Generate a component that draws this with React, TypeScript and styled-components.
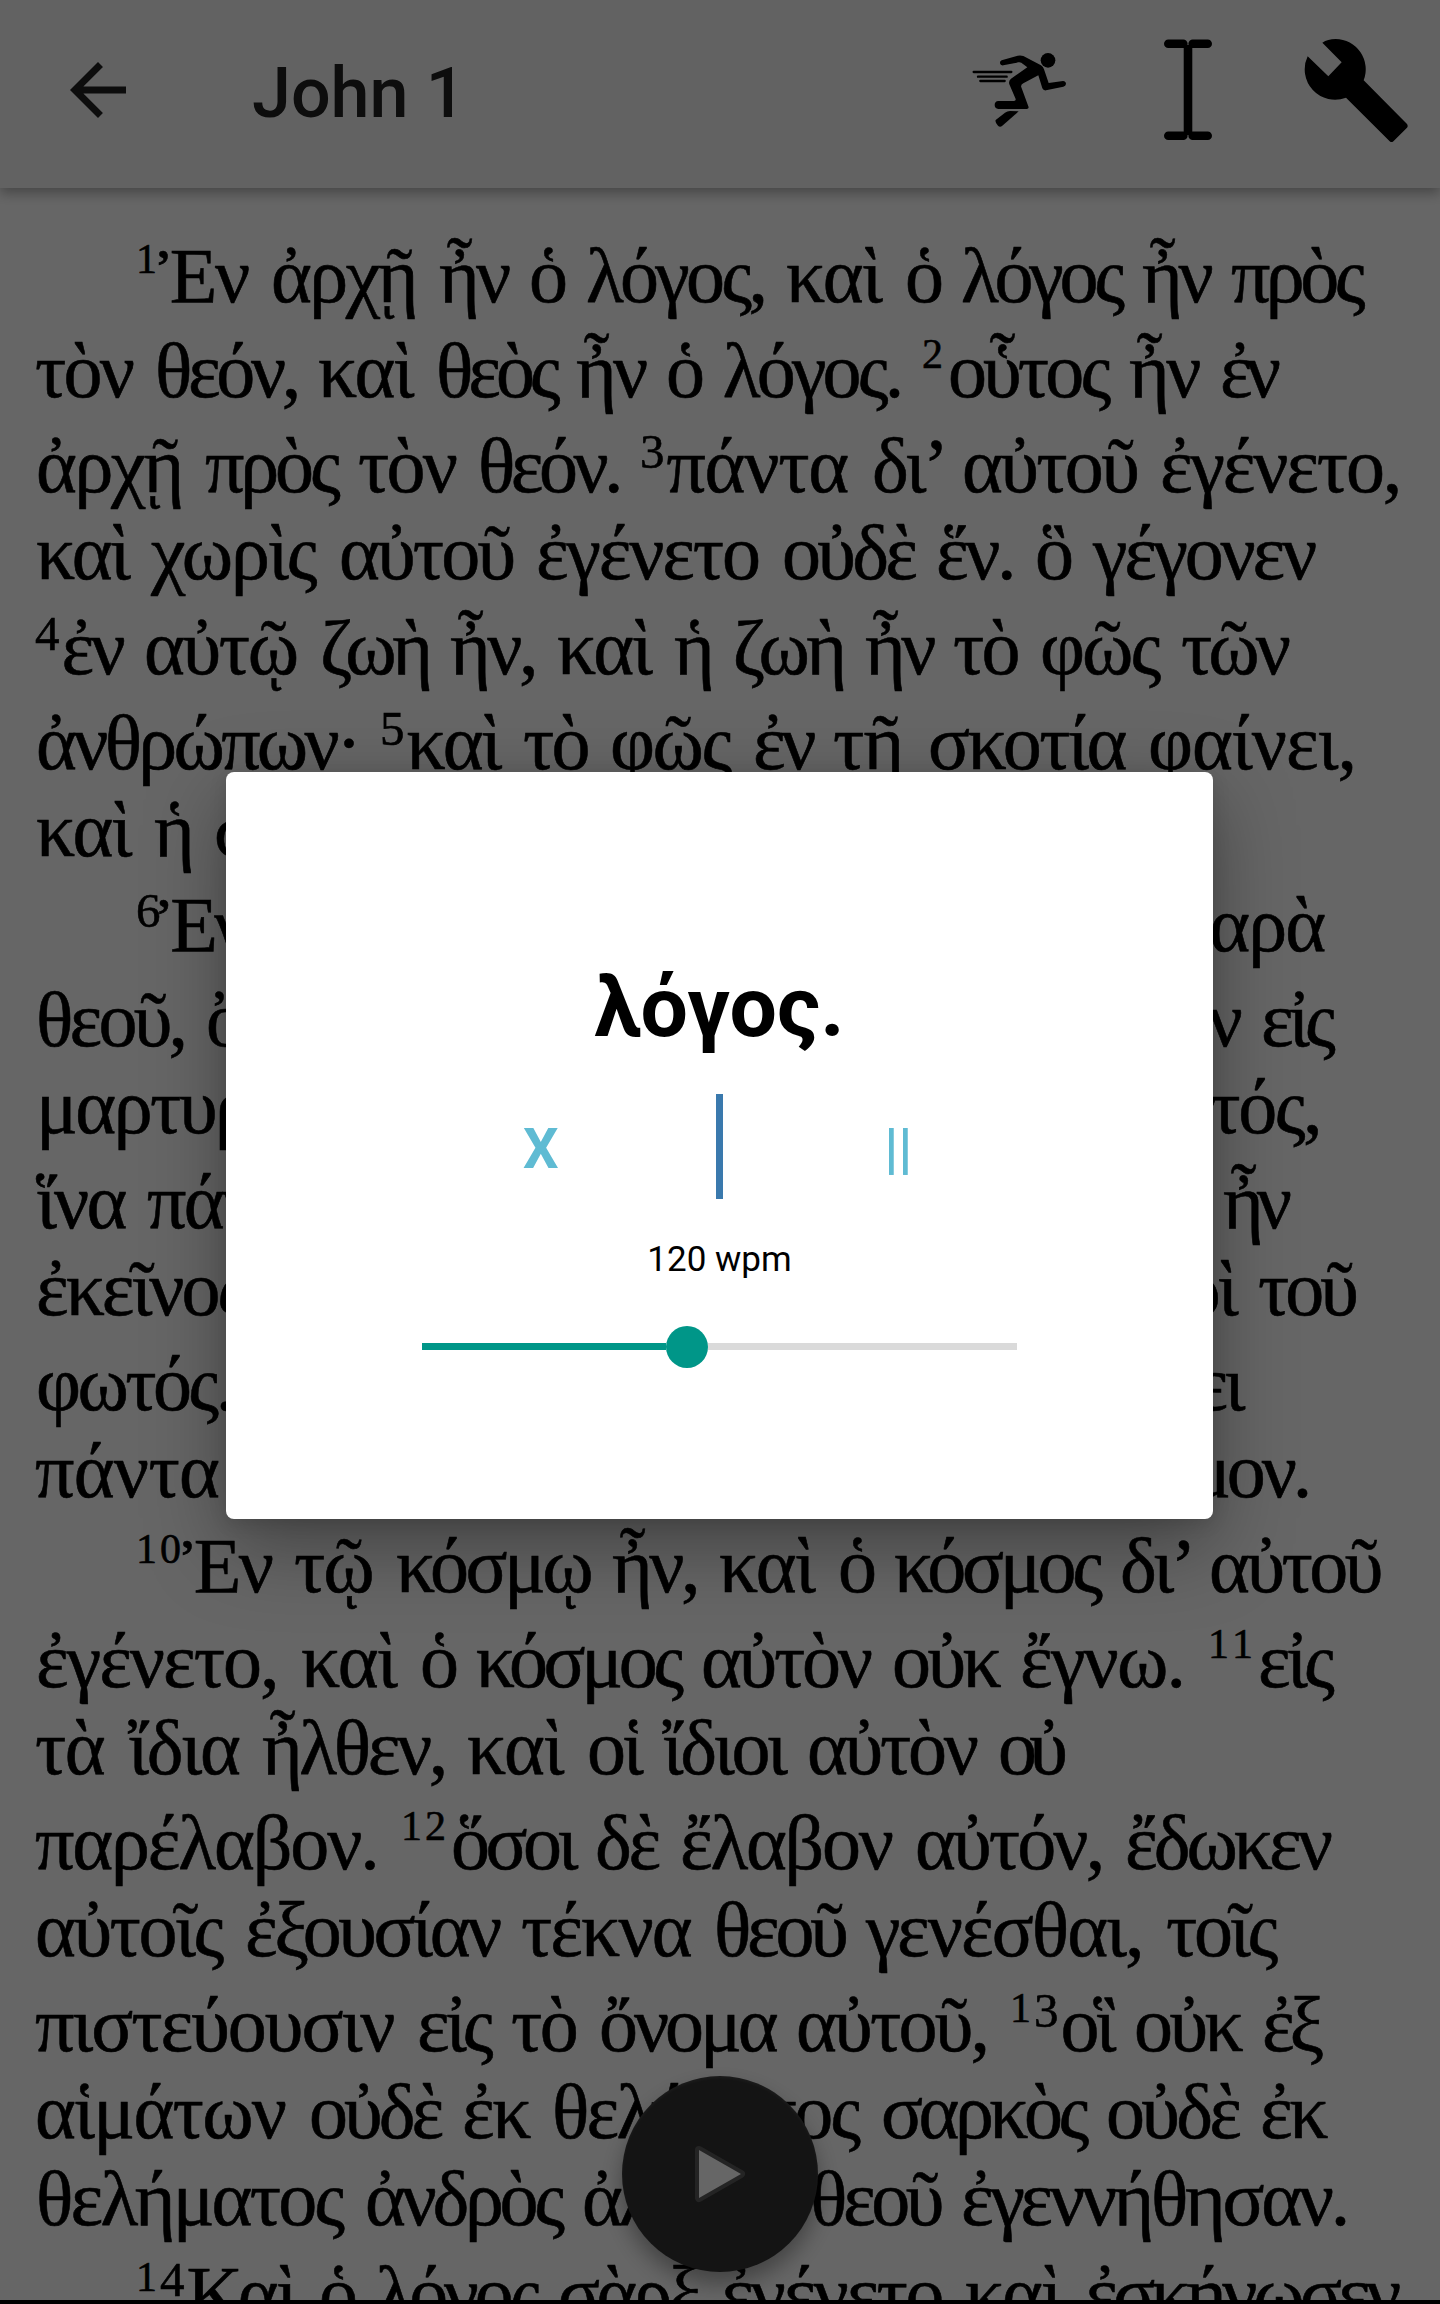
import React, { useLayoutEffect, useRef, useState } from 'react';
import styled, { createGlobalStyle } from 'styled-components';

const GlobalStyle = createGlobalStyle`
  *, *::before, *::after { box-sizing: border-box; }
  html, body { margin: 0; padding: 0; background: #fff; }
  svg { display: block; }
`;

const Screen = styled.div`
  position: relative;
  display: flex;
  flex-direction: column;
  width: 1440px;
  height: 2304px;
  overflow: hidden;
  background: #fff;
`;

const Toolbar = styled.header`
  position: relative;
  z-index: 1;
  display: flex;
  align-items: center;
  flex: none;
  height: 188px;
  padding: 0 32px 8px 56px;
  background: #f6f6f6;
  box-shadow: 0 5px 12px rgba(0, 0, 0, 0.32);
`;

const Title = styled.h1`
  flex: 1;
  margin: 6px 0 0 112px;
  font: 500 70px/84px Roboto, sans-serif;
  color: #212121;
`;

const Actions = styled.div`
  display: flex;
  align-items: center;
`;

const Action = styled.span<{ $gap?: number; $lift?: number }>`
  display: flex;
  margin-left: ${(p) => p.$gap ?? 0}px;
  padding-bottom: ${(p) => p.$lift ?? 0}px;
`;

const Reader = styled.main`
  flex: 1;
  min-height: 0;
  overflow: hidden;
  padding-top: 36px;
  font-family: 'Liberation Serif', 'Noto Sans', serif;
  font-size: 78px;
  color: #000;
  -webkit-text-stroke: 0.6px #000;
`;

const LineBox = styled.div<{ $tall: boolean }>`
  display: flex;
  align-items: flex-end;
  height: ${(p) => (p.$tall ? 95 : 87)}px;
  line-height: 87px;
  white-space: pre;
`;

const Segment = styled.span`
  flex: none;
`;

const SegmentText = styled.span`
  word-spacing: 6px;
`;

const Digit = styled.span<{ $low: boolean }>`
  font-size: ${(p) => (p.$low ? 42 : 49)}px;
  line-height: 0;
  letter-spacing: ${(p) => (p.$low ? 3 : 0)}px;
  vertical-align: ${(p) => (p.$low ? 29 : 24)}px;
`;

const VerseNumber = styled.span<{ $tuck: boolean }>`
  margin-right: ${(p) => (p.$tuck ? -1 : 2)}px;
`;

const NavBar = styled.footer`
  position: relative;
  z-index: 3;
  flex: none;
  height: 4px;
  background: #000;
`;

const PlayButton = styled.button`
  position: absolute;
  left: 622px;
  top: 2076px;
  z-index: 1;
  display: flex;
  align-items: center;
  justify-content: center;
  width: 196px;
  height: 196px;
  padding: 0;
  border: 0;
  border-radius: 50%;
  background: #323232;
  box-shadow: 0 12px 22px rgba(0, 0, 0, 0.35), inset 0 2px 3px rgba(255, 255, 255, 0.1);
`;

const Scrim = styled.div`
  position: absolute;
  inset: 0;
  z-index: 2;
  display: flex;
  align-items: flex-start;
  justify-content: center;
  padding: 772px 1px 0 0;
  background: rgba(0, 0, 0, 0.6);
`;

const Dialog = styled.section`
  display: flex;
  flex-direction: column;
  align-items: center;
  width: 987px;
  height: 747px;
  padding-top: 186px;
  border-radius: 8px;
  background: #fff;
  box-shadow: 0 26px 80px rgba(0, 0, 0, 0.36), 0 4px 18px rgba(0, 0, 0, 0.12);
  font-family: Roboto, sans-serif;
`;

const Word = styled.div`
  height: 100px;
  font-weight: 700;
  font-size: 84px;
  line-height: 100px;
  color: #000;
`;

const Controls = styled.div`
  display: grid;
  grid-template-columns: 1fr 7px 1fr;
  align-items: center;
  width: 708px;
  height: 105px;
  margin-top: 36px;
`;

const Control = styled.button`
  padding: 4px 0 0;
  border: 0;
  background: none;
  font: 700 56px/66px Roboto, sans-serif;
  color: #5fbbd3;
`;

const Marker = styled.span`
  height: 105px;
  background: #3a79ad;
`;

const Speed = styled.div`
  margin-top: 40px;
  font-size: 35px;
  line-height: 42px;
  color: #000;
`;

const Slider = styled.div`
  display: flex;
  align-items: center;
  width: 595px;
  height: 42px;
  margin-top: 45px;
`;

const TrackDone = styled.span`
  width: 243.5px;
  height: 7px;
  margin-bottom: 1px;
  background: #009688;
`;

const Thumb = styled.span`
  width: 42px;
  height: 42px;
  border-radius: 50%;
  background: #009688;
`;

const TrackRest = styled.span`
  flex: 1;
  height: 7px;
  margin-bottom: 1px;
  background: #dadada;
`;

// Each line is split into segments by "|"; stops holds the left edge of every
// segment and, last, the right edge of the line.
type LineData = { text: string; stops: number[] };

const LINES: LineData[] = [
  { text: '1Ἐν|ἀρχῇ|ἦν|ὁ λόγος,|καὶ|ὁ λόγος|ἦν|πρὸς', stops: [137, 272, 440, 530, 787, 906, 1143, 1232, 1362] },
  { text: 'τὸν|θεόν,|καὶ|θεὸς|ἦν|ὁ λόγος.|2οὗτος|ἦν|ἐν', stops: [36, 156, 319, 437, 577, 667, 923, 1130, 1221, 1275] },
  { text: 'ἀρχῇ|πρὸς|τὸν|θεόν.|3πάντα|δι’|αὐτοῦ|ἐγένετο,', stops: [37, 206, 359, 479, 641, 873, 963, 1161, 1401] },
  { text: 'καὶ|χωρὶς|αὐτοῦ|ἐγένετο|οὐδὲ|ἕν.|ὃ γέγονεν', stops: [37, 152, 340, 537, 783, 937, 1036, 1315] },
  { text: '4ἐν|αὐτῷ|ζωὴ|ἦν,|καὶ|ἡ ζωὴ|ἦν|τὸ|φῶς|τῶν', stops: [36, 145, 321, 451, 558, 675, 866, 954, 1041, 1182, 1288] },
  { text: 'ἀνθρώπων·|5καὶ|τὸ|φῶς|ἐν|τῇ|σκοτία|φαίνει,', stops: [37, 381, 524, 611, 754, 834, 929, 1149, 1357] },
  { text: 'καὶ|ἡ|σκοτία|αὐτὸ οὐ κατέλαβεν.', stops: [37, 155, 215, 434, 1001] },
  { text: '6Ἐγένετο ἄνθρωπος, ἀπεσταλμένος|παρὰ', stops: [137, 1173, 1325] },
  { text: 'θεοῦ,|ὄνομα αὐτῷ Ἰωάννης· 7οὗτος ἦλθεν|εἰς', stops: [37, 207, 1262, 1332] },
  { text: 'μαρτυρίαν, ἵνα μαρτυρήσῃ περὶ τοῦ|φωτός,', stops: [37, 1119, 1321] },
  { text: 'ἵνα|πάντες πιστεύσωσιν δι’ αὐτοῦ. 8οὐκ|ἦν', stops: [37, 148, 1224, 1286] },
  { text: 'ἐκεῖνος τὸ φῶς, ἀλλ’ ἵνα μαρτυρήσῃ περὶ|τοῦ', stops: [37, 1259, 1356] },
  { text: 'φωτός. 9ἦν τὸ φῶς τὸ ἀληθινόν, ὃ φωτίζει', stops: [37, 1243] },
  { text: 'πάντα|ἄνθρωπον, ἐρχόμενον εἰς τὸν κόσμον.', stops: [36, 245, 1309] },
  { text: '10Ἐν|τῷ|κόσμῳ|ἦν,|καὶ|ὁ κόσμος|δι’|αὐτοῦ', stops: [137, 295, 397, 613, 720, 839, 1121, 1210, 1381] },
  { text: 'ἐγένετο,|καὶ|ὁ κόσμος|αὐτὸν|οὐκ|ἔγνω.|11εἰς', stops: [37, 302, 421, 702, 893, 1021, 1209, 1332] },
  { text: 'τὰ|ἴδια|ἦλθεν,|καὶ|οἱ ἴδιοι|αὐτὸν|οὐ', stops: [36, 129, 263, 468, 588, 808, 999, 1061] },
  { text: 'παρέλαβον.|12ὅσοι|δὲ|ἔλαβον|αὐτόν,|ἔδωκεν', stops: [36, 402, 596, 681, 916, 1126, 1330] },
  { text: 'αὐτοῖς|ἐξουσίαν|τέκνα|θεοῦ|γενέσθαι,|τοῖς', stops: [36, 246, 522, 715, 867, 1167, 1276] },
  { text: 'πιστεύουσιν|εἰς|τὸ|ὄνομα|αὐτοῦ,|13οἳ|οὐκ|ἐξ', stops: [36, 418, 512, 600, 797, 1011, 1135, 1263, 1320] },
  { text: 'αἱμάτων|οὐδὲ|ἐκ|θελήματος|σαρκὸς|οὐδὲ|ἐκ', stops: [36, 310, 463, 553, 882, 1107, 1261, 1326] },
  { text: 'θελήματος|ἀνδρὸς|ἀλλ’ ἐκ|θεοῦ|ἐγεννήθησαν.', stops: [37, 366, 583, 811, 962, 1348] },
  { text: '14Καὶ|ὁ λόγος|σὰρξ|ἐγένετο|καὶ|ἐσκήνωσεν', stops: [137, 320, 559, 722, 966, 1086, 1398] },
];

// Tracks the letters of a segment so that it fills its measure.
function FittedText({ text, width }: { text: string; width: number }) {
  const ref = useRef<HTMLSpanElement>(null);
  const [tracking, setTracking] = useState(0);
  const parts = text.split(/(\d+)/).filter(Boolean);
  const letters = text.replace(/\d/g, '').length;

  useLayoutEffect(() => {
    if (!ref.current) return;
    const natural = ref.current.getBoundingClientRect().width - tracking * letters;
    setTracking((width - natural) / letters);
  }, [width, letters]);

  return (
    <Segment style={{ width }}>
      <SegmentText ref={ref} style={{ letterSpacing: tracking }}>
        {parts.map((part, i) =>
          /\d/.test(part) ? (
            <VerseNumber key={i} $tuck={/^[ἘἸ]/.test(parts[i + 1] ?? '')}>
              {part.split('').map((d, j) => (
                <Digit key={j} $low={'012'.includes(d)}>{d}</Digit>
              ))}
            </VerseNumber>
          ) : (
            <React.Fragment key={i}>{part}</React.Fragment>
          ),
        )}
      </SegmentText>
    </Segment>
  );
}

function Line({ text, stops }: LineData) {
  const segments = text.split('|');
  return (
    <LineBox $tall={/\d/.test(text)} style={{ paddingLeft: stops[0] - 1 }}>
      {segments.map((segment, i) => (
        <FittedText
          key={i}
          text={i < segments.length - 1 ? segment + ' ' : segment}
          width={stops[i + 1] - stops[i]}
        />
      ))}
    </LineBox>
  );
}

const BackIcon = () => (
  <svg width="84" height="84" viewBox="0 0 24 24" fill="#212121">
    <path d="M20 11H7.83l5.59-5.59L12 4l-8 8 8 8 1.41-1.41L7.83 13H20v-2z" />
  </svg>
);

const RunIcon = () => (
  <svg width="120" height="110" viewBox="0 0 360 330">
    <circle cx="264" cy="91" r="22" />
    <path d="M41 126H154M54 140H140M61 153H134" stroke="#000" strokeWidth="7" strokeLinecap="round" />
    <path d="M125 91L173 77Q182 75 190 78L243 106Q250 110 252 118L266 159L309 153Q318 154 318 162Q317 168 310 170L258 181Q250 182 247 175L235 136L190 160Q181 165 184 172L206 232Q206 237 200 237H115Q104 236 104 225Q104 214 115 213H162Q168 213 167 207L148 163Q145 152 153 146L202 112L184 98Q180 96 175 97L130 106Q121 107 120 100Q119 94 125 91Z" />
    <path d="M176 244L127 287Q120 293 114 287Q104 276 107 270L135 248Q142 243 150 243Z" />
  </svg>
);

const CursorIcon = () => (
  <svg width="48" height="102" viewBox="0 0 48 102">
    <g stroke="#000" strokeWidth="8.6" strokeLinecap="round">
      <path d="M4.300 4.800H19.300M28.700 4.800H43.700M4.300 96.800H19.300M28.700 96.800H43.700" />
      <path d="M24 6V96" strokeLinecap="butt" />
    </g>
  </svg>
);

const WrenchIcon = () => (
  <svg width="104" height="104" viewBox="1092 113 312 312">
    <path d="M1147 127Q1163 116 1187 116A91 91 0 0 1 1271 240L1401 371Q1405 377 1401 382L1361 422Q1355 428 1349 423L1218 292A91 91 0 0 1 1103 168L1165 228L1205 186Z" />
  </svg>
);

const PlayIcon = () => (
  <svg width="56" height="64" viewBox="0 0 56 64">
    <path d="M7 8L49 32L7 56Z" fill="#5a5a5a" stroke="#5a5a5a" strokeWidth="8" strokeLinejoin="round" />
    <path d="M7 8L49 32L7 56Z" fill="#fff" />
  </svg>
);

export default function App() {
  return (
    <>
      <GlobalStyle />
      <Screen>
        <Toolbar>
          <BackIcon />
          <Title>John 1</Title>
          <Actions>
            <Action $lift={10}><RunIcon /></Action>
            <Action $gap={84}><CursorIcon /></Action>
            <Action $gap={92}><WrenchIcon /></Action>
          </Actions>
        </Toolbar>
        <Reader>
          {LINES.map((line) => (
            <Line key={line.text} {...line} />
          ))}
        </Reader>
        <PlayButton aria-label="Play"><PlayIcon /></PlayButton>
        <Scrim>
          <Dialog>
            <Word>λόγος.</Word>
            <Controls>
              <Control>X</Control>
              <Marker />
              <Control>||</Control>
            </Controls>
            <Speed>120 wpm</Speed>
            <Slider>
              <TrackDone />
              <Thumb />
              <TrackRest />
            </Slider>
          </Dialog>
        </Scrim>
        <NavBar />
      </Screen>
    </>
  );
}
